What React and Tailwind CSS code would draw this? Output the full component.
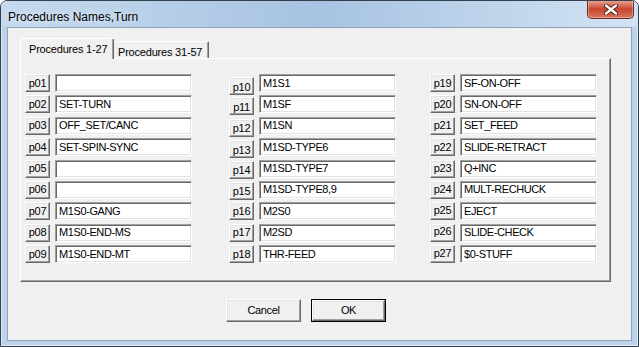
import React from "react"

// [id, text, extra button classes] - a few buttons sit a bit off their row
const cols = [
  [
    ["p01", ""],
    ["p02", "SET-TURN"],
    ["p03", "OFF_SET/CANC"],
    ["p04", "SET-SPIN-SYNC"],
    ["p05", ""],
    ["p06", ""],
    ["p07", "M1S0-GANG"],
    ["p08", "M1S0-END-MS"],
    ["p09", "M1S0-END-MT"],
  ],
  [
    ["p10", "M1S1", "self-start mt-[3px] h-[17px] pt-[2px]"],
    ["p11", "M1SF", "self-start mt-[2px] pt-[2px]"],
    ["p12", "M1SN", "self-start mt-[2px] pt-[2px]"],
    ["p13", "M1SD-TYPE6", "self-start mt-[2px] pt-[2px]"],
    ["p14", "M1SD-TYPE7", "self-start mt-[1px] pt-[1px]"],
    ["p15", "M1SD-TYPE8,9", "self-start mt-[1px] pt-[1px]"],
    ["p16", "M2S0"],
    ["p17", "M2SD"],
    ["p18", "THR-FEED"],
  ],
  [
    ["p19", "SF-ON-OFF"],
    ["p20", "SN-ON-OFF"],
    ["p21", "SET_FEED"],
    ["p22", "SLIDE-RETRACT"],
    ["p23", "Q+INC"],
    ["p24", "MULT-RECHUCK"],
    ["p25", "EJECT", "self-start h-[17px] pb-[2px]"],
    ["p26", "SLIDE-CHECK", "self-start h-[17px] pb-[2px]"],
    ["p27", "$0-STUFF", "self-start h-[16px] pb-[2px]"],
  ],
]

const font = "font-['Liberation_Sans',Arial,sans-serif]"

const raised =
  "border border-t-white border-l-white border-r-[#696969] border-b-[#696969] shadow-[inset_-1px_-1px_0_#a0a0a0,inset_1px_1px_0_#e3e3e3] bg-[#f0f0f0]"

const Row = ({ id, value, extra = "h-[18px]" }) => (
  <div className="flex items-center h-[18px]">
    <button
      className={`${raised} w-[25px] h-[18px] flex items-center justify-center text-[11px] tracking-[-0.3px] text-black leading-none ${extra}`}
    >
      {id}
    </button>
    <div className="ml-[5px] w-[137px] h-[18px] bg-white border border-t-[#a0a0a0] border-l-[#a0a0a0] border-r-white border-b-white shadow-[inset_1px_1px_0_#696969,inset_-1px_-1px_0_#e3e3e3] flex items-center pl-[3px] text-[11px] tracking-[-0.4px] text-black leading-none">
      {value}
    </div>
  </div>
)

const Column = ({ items, className }) => (
  <div className={`flex flex-col justify-between h-[189px] ${className}`}>
    {items.map(([id, value, extra]) => (
      <Row key={id} id={id} value={value} extra={extra} />
    ))}
  </div>
)

export default function App() {
  return (
    <div className={`w-[639px] h-[347px] ${font} bg-[#bcd3eb] border border-[#34404e] rounded-t-[7px] shadow-[inset_0_0_0_1px_rgba(255,255,255,0.55)] flex flex-col overflow-hidden`}>
      {/* title bar */}
      <div className="h-[26px] flex items-start bg-gradient-to-r from-[#c6daef] via-[#a7c3e1] to-[#d3e3f4]">
        <div className="pl-[7px] pt-[7px] text-[12px] text-black [text-shadow:0_0_6px_rgba(255,255,255,0.9)]">
          Procedures Names,Turn
        </div>
        <div className="ml-auto mr-[4px] -mt-px w-[47px] h-[19px] rounded-b-[5px] border border-t-0 border-[#6b2a22] bg-gradient-to-b from-[#e9a797] via-[#c7452f] to-[#d8755d] shadow-[inset_0_0_0_1px_rgba(255,255,255,0.35)] flex items-center justify-center">
          <svg width="14" height="11" viewBox="0 0 14 11">
            <path d="M2 1.5 L12 9.5 M12 1.5 L2 9.5" stroke="#4a1a14" strokeWidth="4.2" strokeLinecap="round" />
            <path d="M2 1.5 L12 9.5 M12 1.5 L2 9.5" stroke="#ffffff" strokeWidth="2.4" strokeLinecap="round" />
          </svg>
        </div>
      </div>

      {/* client area */}
      <div className="mx-[6px] h-[314px] border border-[#8da3bd] bg-[#f0f0f0] pl-[12px] pt-[10px] text-[11px]">
        {/* tabs */}
        <div className="flex items-end h-[20px]">
          <div className="relative z-10 -mb-px w-[94px] h-[21px] bg-[#f0f0f0] border-t border-l border-white border-r border-r-[#696969] rounded-t-[2px] shadow-[inset_-1px_0_0_#a0a0a0] pl-[8px] pt-[2px] tracking-[-0.2px] text-black">
            Procedures 1-27
          </div>
          <div className="w-[95px] h-[17px] bg-[#f0f0f0] border-t border-white border-r border-r-[#696969] rounded-t-[2px] shadow-[inset_-1px_0_0_#a0a0a0] pl-[4px] pt-[2px] tracking-[-0.2px] text-black">
            Procedures 31-57
          </div>
        </div>

        {/* tab panel */}
        <div className="w-[591px] h-[224px] border border-t-white border-l-white border-r-[#696969] border-b-[#696969] shadow-[inset_-1px_-1px_0_#a0a0a0] pl-[4px] pt-[15px] flex items-start">
          <Column items={cols[0]} />
          <Column items={cols[1]} className="ml-[37px]" />
          <Column items={cols[2]} className="ml-[34px]" />
        </div>

        {/* dialog buttons */}
        <div className="flex ml-[206px] mt-[17px] gap-[10px]">
          <button className={`${raised} w-[75px] h-[23px] flex items-center justify-center text-[11px] tracking-[-0.35px] text-black`}>
            Cancel
          </button>
          <div className="w-[75px] h-[23px] border border-black">
            <button className={`${raised} w-full h-full flex items-center justify-center text-[11px] tracking-[-0.35px] text-black`}>
              OK
            </button>
          </div>
        </div>
      </div>
    </div>
  )
}
